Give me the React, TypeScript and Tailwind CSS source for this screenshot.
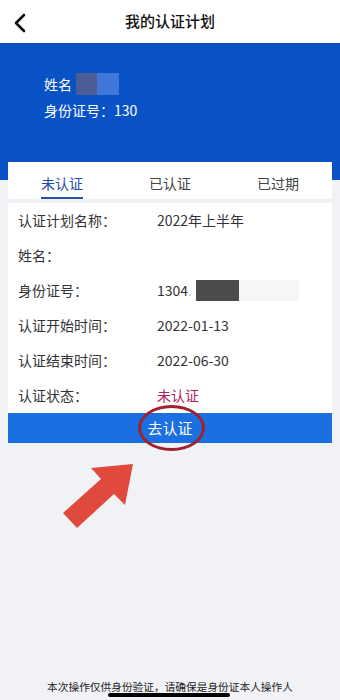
import React from "react";

const rows: { label: string; value: React.ReactNode }[] = [
  { label: "认证计划名称：", value: "2022年上半年" },
  { label: "姓名：", value: "" },
  {
    label: "身份证号：",
    value: (
      <span className="flex items-center">
        <span>1304</span>
        <span className="text-[#d0d0d0]">.</span>
        <span className="ml-[4px] inline-block h-[21px] w-[43px] bg-[#4b4b4b]" />
        <span className="inline-block h-[21px] w-[60px] bg-[#f6f6f6]" />
      </span>
    ),
  },
  { label: "认证开始时间：", value: "2022-01-13" },
  { label: "认证结束时间：", value: "2022-06-30" },
  { label: "认证状态：", value: <span className="text-[#b0245e]">未认证</span> },
];

export default function App() {
  return (
    <div
      className="relative flex h-[700px] w-[340px] flex-col overflow-hidden bg-[#f1f2f6] text-[#333]"
      style={{ fontFamily: '"Noto Sans CJK SC", "Noto Sans", sans-serif' }}
    >
      {/* Header */}
      <div className="relative flex h-[43px] items-center justify-center bg-white">
        <svg className="absolute left-[12px] top-[13px]" width="16" height="20" viewBox="0 0 16 20">
          <path d="M12 2 L4 10 L12 18" fill="none" stroke="#111" strokeWidth="2.6" strokeLinecap="round" strokeLinejoin="round" />
        </svg>
        <span className="text-[15px] font-medium text-[#111]">我的认证计划</span>
      </div>

      {/* Blue banner */}
      <div className="h-[137px] bg-[#0852c6] px-[44px] pt-[28px] text-[14px] text-white">
        <div className="flex h-[26px] items-center">
          <span>姓名</span>
          <span className="ml-[4px] inline-block h-[22px] w-[21px] bg-[#4b5d97]" />
          <span className="inline-block h-[22px] w-[22px] bg-[#3f78d8]" />
        </div>
        <div className="flex h-[26px] items-center">身份证号：130</div>
      </div>

      {/* Tabs */}
      <div className="mx-[8px] -mt-[18px] flex h-[37px] bg-white text-[14px]">
        <div className="flex flex-1 flex-col items-center justify-end">
          <span className="text-[#1d4ea8]">未认证</span>
          <span className="mt-[3px] h-[2px] w-[42px] bg-[#2453a8]" />
        </div>
        <div className="flex flex-1 items-end justify-center pb-[5px] text-[#444]">已认证</div>
        <div className="flex flex-1 items-end justify-center pb-[5px] text-[#444]">已过期</div>
      </div>

      {/* Detail card */}
      <div className="mx-[8px] mt-[4px] bg-white pl-[10px] text-[14px]">
        {rows.map((r) => (
          <div key={r.label} className="flex h-[35px] items-center">
            <span className="w-[139px] text-[#333]">{r.label}</span>
            <span className="text-[#333]">{r.value}</span>
          </div>
        ))}
      </div>

      {/* Button */}
      <div className="relative mx-[8px] flex h-[30px] items-center justify-center bg-[#1b6fe0] text-[15px] text-white">
        去认证
        <span className="absolute left-[130px] top-[-8px] h-[46px] w-[67px] rounded-[50%] border-[3px] border-[#a3202a]" />
      </div>

      {/* Arrow annotation */}
      <svg className="absolute left-0 top-0" width="340" height="700" viewBox="0 0 340 700" pointerEvents="none">
        <polygon points="133,464 91,468 101,479 63,513 77,528 114,494 125,505" fill="#e04a3c" />
      </svg>

      <div className="flex-1" />

      {/* Footer note */}
      <div className="pb-[5px] text-center text-[10.7px] text-[#222]">本次操作仅供身份验证，请确保是身份证本人操作人</div>
      <span className="absolute bottom-[3px] left-[108px] h-[4px] w-[122px] rounded-full bg-black" />
    </div>
  );
}
